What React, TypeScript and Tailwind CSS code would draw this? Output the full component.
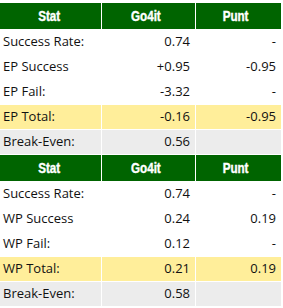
const sections = [
  {
    rows: [
      { label: "Success Rate:", go: "0.74", punt: "-" },
      { label: "EP Success", go: "+0.95", punt: "-0.95" },
      { label: "EP Fail:", go: "-3.32", punt: "-" },
      { label: "EP Total:", go: "-0.16", punt: "-0.95", kind: "total" },
      { label: "Break-Even:", go: "0.56", punt: "", kind: "even" },
    ],
  },
  {
    rows: [
      { label: "Success Rate:", go: "0.74", punt: "-" },
      { label: "WP Success", go: "0.24", punt: "0.19" },
      { label: "WP Fail:", go: "0.12", punt: "-" },
      { label: "WP Total:", go: "0.21", punt: "0.19", kind: "total" },
      { label: "Break-Even:", go: "0.58", punt: "", kind: "even" },
    ],
  },
];

function HeadCell({ text, pad }: { text: string; pad?: boolean }) {
  return (
    <div
      className={`h-[26px] bg-[#006400] flex items-center justify-center ${pad ? "pr-[6px]" : "pr-[2px]"}`}
    >
      <span className="inline-block scale-x-[0.83] text-white font-bold text-[14px] [font-family:'Liberation_Sans',sans-serif] [-webkit-text-stroke:0.4px_white]">
        {text}
      </span>
    </div>
  );
}

export default function App() {
  return (
    <div className="w-[283px] h-[308px] bg-white pt-[3px] overflow-hidden text-[13px] text-[#111] [font-family:'Open_Sans',sans-serif]">
      <div className="grid grid-cols-[101px_93px_85px] gap-px">
        {sections.map((s, i) => (
          <div key={i} className="contents">
            <HeadCell text="Stat" />
            <HeadCell text="Go4it" pad />
            <HeadCell text="Punt" pad />
            {s.rows.map((r) => {
              const bg =
                r.kind === "total"
                  ? "bg-[#ffee9a]"
                  : r.kind === "even"
                    ? "bg-[#ececec]"
                    : "bg-white";
              return (
                <div key={r.label} className="contents">
                  <div className={`h-[24px] flex items-center pl-[3px] ${bg}`}>{r.label}</div>
                  <div className={`h-[24px] flex items-center justify-end pr-[5px] ${bg}`}>{r.go}</div>
                  <div className={`h-[24px] flex items-center justify-end pr-[5px] ${bg}`}>{r.punt}</div>
                </div>
              );
            })}
          </div>
        ))}
      </div>
    </div>
  );
}
